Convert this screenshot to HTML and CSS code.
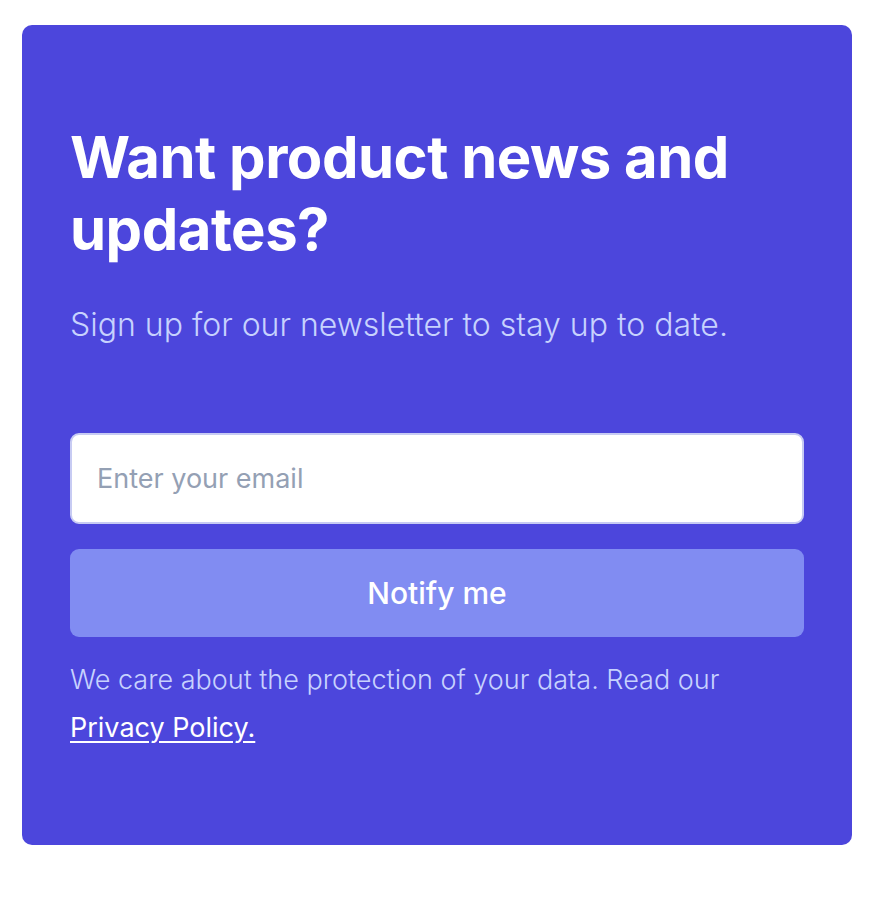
FILE: index.html
```html
<!DOCTYPE html>
<html lang="en">
<head>
<meta charset="utf-8">
<title>Newsletter</title>
<link rel="stylesheet" href="styles.css">
</head>
<body>
  <section class="card">
    <h2 class="title">Want product news and updates?</h2>
    <p class="lead">Sign up for our newsletter to stay up to date.</p>
    <form class="form">
      <input class="email" type="email" placeholder="Enter your email">
      <button class="submit" type="button">Notify me</button>
    </form>
    <p class="note">We care about the protection of your data. Read our <a href="#" class="link">Privacy Policy.</a></p>
  </section>
</body>
</html>
```

FILE: styles.css
```css
html, body {
  margin: 0;
  padding: 0;
  background: #ffffff;
}
body {
  padding: 25px 22px;
  font-family: Inter, "Noto Sans", sans-serif;
}
.card {
  background: #4c46dc;
  border-radius: 10px;
  padding: 96px 48px 0;
  height: 820px;
  box-sizing: border-box;
}
.title {
  margin: 0;
  color: #ffffff;
  font-size: 58px;
  line-height: 72px;
  font-weight: 700;
  letter-spacing: -0.5px;
  max-width: 700px;
}
.lead {
  margin: 38px 0 0;
  color: #c7d2fe;
  font-size: 32px;
  line-height: 44px;
  font-weight: 300;
}
.form {
  margin-top: 86px;
  display: flex;
  flex-direction: column;
  gap: 25px;
}
.email {
  height: 91px;
  box-sizing: border-box;
  border: 2px solid #c7cbf3;
  border-radius: 9px;
  background: #ffffff;
  padding: 0 25px;
  font-family: Inter, "Noto Sans", sans-serif;
  font-size: 27px;
  color: #1f2937;
  outline: none;
}
.email::placeholder {
  color: #94a0b4;
}
.submit {
  height: 88px;
  border: none;
  border-radius: 9px;
  background: #818cf2;
  color: #ffffff;
  font-family: Inter, "Noto Sans", sans-serif;
  font-size: 30px;
  font-weight: 500;
}
.note {
  margin: 19px 0 0;
  color: #c7d2fe;
  font-size: 27px;
  line-height: 48px;
  font-weight: 300;
}
.link {
  color: #ffffff;
  font-weight: 400;
  text-decoration: underline;
  text-underline-offset: 4px;
}
```
